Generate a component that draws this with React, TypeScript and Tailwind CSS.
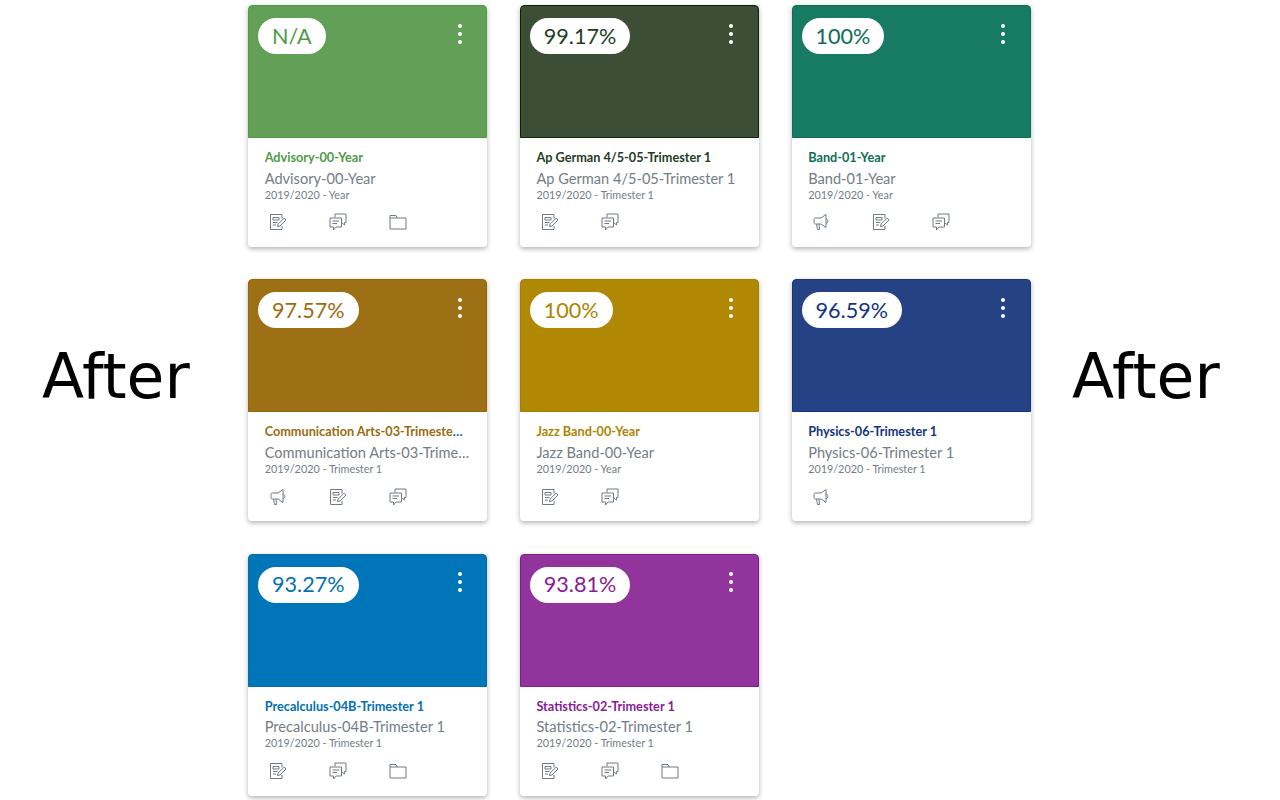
import React from 'react';

type IconName = 'announce' | 'assign' | 'discuss' | 'folder';

interface Course {
  grade: string;
  title: string;
  term: string;
  hero: string;
  text: string;
  icons: IconName[];
}

const courses: Course[] = [
  { grade: 'N/A', title: 'Advisory-00-Year', term: '2019/2020 - Year', hero: 'bg-[#62a057] border-[#4f9a45]', text: 'text-[#4f9a45]', icons: ['assign', 'discuss', 'folder'] },
  { grade: '99.17%', title: 'Ap German 4/5-05-Trimester 1', term: '2019/2020 - Trimester 1', hero: 'bg-[#3c4f36] border-[#0b2404]', text: 'text-[#243d1e]', icons: ['assign', 'discuss'] },
  { grade: '100%', title: 'Band-01-Year', term: '2019/2020 - Year', hero: 'bg-[#177b63] border-[#0b6e56]', text: 'text-[#0b6e56]', icons: ['announce', 'assign', 'discuss'] },
  { grade: '97.57%', title: 'Communication Arts-03-Trimester 1', term: '2019/2020 - Trimester 1', hero: 'bg-[#9d7016] border-[#94660a]', text: 'text-[#9b6b0e]', icons: ['announce', 'assign', 'discuss'] },
  { grade: '100%', title: 'Jazz Band-00-Year', term: '2019/2020 - Year', hero: 'bg-[#b08804] border-[#a88000]', text: 'text-[#ae8500]', icons: ['assign', 'discuss'] },
  { grade: '96.59%', title: 'Physics-06-Trimester 1', term: '2019/2020 - Trimester 1', hero: 'bg-[#254284] border-[#133480]', text: 'text-[#133480]', icons: ['announce'] },
  { grade: '93.27%', title: 'Precalculus-04B-Trimester 1', term: '2019/2020 - Trimester 1', hero: 'bg-[#0076b8] border-[#006fb0]', text: 'text-[#0070b3]', icons: ['assign', 'discuss', 'folder'] },
  { grade: '93.81%', title: 'Statistics-02-Trimester 1', term: '2019/2020 - Trimester 1', hero: 'bg-[#91349b] border-[#861a92]', text: 'text-[#8a1a96]', icons: ['assign', 'discuss', 'folder'] },
];

const CardIcon = ({ name }: { name: IconName }) => {
  const shared = {
    width: 18,
    height: 18,
    viewBox: '0 0 18 18',
    fill: 'none',
    stroke: '#6f7a84',
    strokeWidth: 1,
  };
  if (name === 'assign') {
    return (
      <svg {...shared}>
        <path d="M13 5.500V1.500H1.500v15H13v-3.500" />
        <path d="M4 4.500h6v2.500H4zM4 9.500h4.500M4 12h3" />
        <path d="M8.500 13.500l.6-2.400 6-6 1.900 1.900-6 6z" />
      </svg>
    );
  }
  if (name === 'discuss') {
    return (
      <svg {...shared}>
        <path d="M6 4.500V1h11v8.500h-1.500v2.500l-3-2.500" />
        <path d="M1 5h11.500v9H7l-2.500 3v-3H1z" />
        <path d="M3.500 8h6.500M3.500 10.500h4.500" />
      </svg>
    );
  }
  if (name === 'folder') {
    return (
      <svg {...shared}>
        <path d="M1 16V2.500h6l1.500 2.500H17v11z" />
        <path d="M1 5h7.500" />
      </svg>
    );
  }
  return (
    <svg {...shared}>
      <path d="M2 6.500c0-1 .5-1.500 1.500-1.500H9l5-3.500v13L9 11H3.500C2.500 11 2 10.500 2 9.500z" />
      <path d="M4.500 11l1 5.500h2L7 11M14 6c2.500.5 2.500 4 0 4.500" />
    </svg>
  );
};

const CourseCard = ({ course }: { course: Course }) => (
  <div className="h-[242px] w-[239px] overflow-hidden rounded-[4px] bg-white shadow-[0_2px_5px_rgba(0,0,0,0.3)]">
    <div className={`relative h-[133px] rounded-t-[4px] border ${course.hero}`}>
      <div className={`absolute left-[9px] top-[12px] flex h-[36px] items-center rounded-[18px] bg-white px-[14px] pb-[0.500px] text-[21.600px] ${course.text}`}>
        {course.grade}
      </div>
      <div className="absolute left-[208.700px] top-[17.500px] flex flex-col gap-[4px]">
        <span className="h-[4px] w-[4px] rounded-full bg-white" />
        <span className="h-[4px] w-[4px] rounded-full bg-white" />
        <span className="h-[4px] w-[4px] rounded-full bg-white" />
      </div>
    </div>
    <div className="flex flex-col pl-[16.700px] pr-[17px] pt-[11px]">
      {/* the ellipsis keeps the link blue, only the inner span takes the course colour */}
      <div className="truncate pr-[5px] text-[12.700px] font-bold leading-[16px] text-[#0374b5]">
        <span className={course.text}>{course.title}</span>
      </div>
      <div className="mt-[4.500px] truncate text-[14.600px] leading-[18px] text-[#747d85]">{course.title}</div>
      <div className="truncate text-[10.800px] leading-[14px] text-[#747d85]">{course.term}</div>
      <div className="mt-[11.700px] flex">
        {course.icons.map((icon, i) => (
          <div key={i} className="w-[60px] pl-[4.300px]">
            <CardIcon name={icon} />
          </div>
        ))}
      </div>
    </div>
  </div>
);

export default function App() {
  return (
    <div className="flex h-[800px] w-[1280px] overflow-hidden bg-white font-['Lato','Open_Sans',sans-serif]">
      <div className="flex w-[248px] items-center pb-[44px] pl-[42px] font-['DejaVu_Sans',sans-serif] text-[61.500px] leading-none text-black">
        After
      </div>
      <div className="grid w-[783px] grid-cols-[239px_239px_239px] content-start gap-x-[32.750px] gap-y-[32.400px] pt-[5px]">
        {courses.map((course) => (
          <CourseCard key={course.title} course={course} />
        ))}
      </div>
      <div className="flex flex-1 items-center pb-[44px] pl-[41px] font-['DejaVu_Sans',sans-serif] text-[61.500px] leading-none text-black">
        After
      </div>
    </div>
  );
}
